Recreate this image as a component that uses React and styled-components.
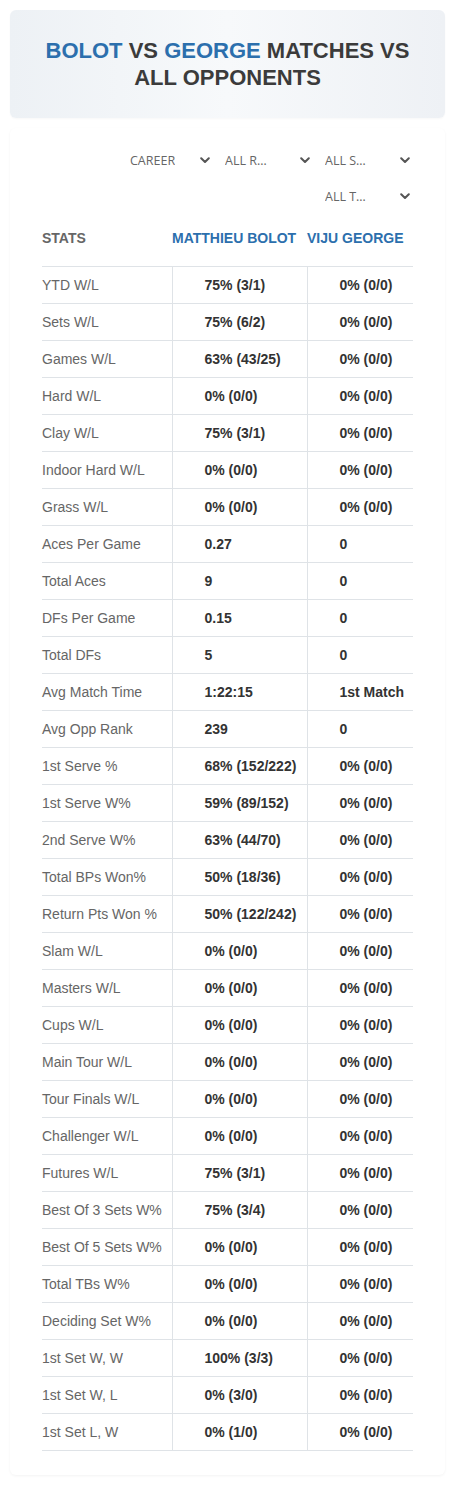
import React from 'react';
import styled, { createGlobalStyle } from 'styled-components';

const GlobalStyle = createGlobalStyle`
    body {
        margin: 0;
        background: #ffffff;
        font-family: 'Liberation Sans', Arial, sans-serif;
    }
`;

const Page = styled.div`
    padding: 10px;
    display: flex;
    flex-direction: column;
    gap: 10px;
`;

const HeaderCard = styled.div`
    border-radius: 6px;
    padding: 27px 20px;
    background: linear-gradient(90deg, #edf1f5 0%, #f7f9fb 50%, #eef1f5 100%);
    box-shadow: 0 1px 2px rgba(0, 0, 0, 0.03);
`;

const Title = styled.h1`
    margin: 0;
    text-align: center;
    font-size: 22px;
    line-height: 27px;
    font-weight: 700;
    text-transform: uppercase;
    color: #3b3b3b;
`;

const Name = styled.span`
    color: #2c6fad;
`;

const Card = styled.div`
    border-radius: 6px;
    padding: 18px 32px 24px;
    box-shadow: 0 1px 3px rgba(0, 0, 0, 0.05);
`;

const Filters = styled.div`
    display: flex;
    flex-wrap: wrap;
    justify-content: flex-end;
    gap: 8px 10px;
    margin-left: 80px;
`;

const Select = styled.div`
    width: ${p => p.$w || 90}px;
    height: 28px;
    box-sizing: border-box;
    padding: 0 3px 0 2px;
    display: flex;
    align-items: center;
    justify-content: space-between;
    font-family: 'Open Sans', 'Noto Sans', sans-serif;
    font-size: 12.5px;
    color: #666;
`;

const SelectText = styled.span`
    max-width: 52px;
    white-space: nowrap;
    overflow: hidden;
    text-overflow: ellipsis;
`;

const Table = styled.table`
    width: 100%;
    margin-top: 6px;
    border-collapse: collapse;
    table-layout: fixed;
`;

const HeadCell = styled.th`
    padding: 12px 0 18px;
    text-align: left;
    font-size: 14px;
    line-height: 20px;
    font-weight: 700;
    white-space: nowrap;
    text-transform: uppercase;
    color: ${p => (p.$blue ? '#2c6fad' : '#666')};
    border-bottom: 1px solid #dfe3e7;
`;

const Cell = styled.td`
    height: 36px;
    padding: 0 0 0 ${p => (p.$value ? '32px' : '0')};
    font-size: 14px;
    white-space: nowrap;
    font-weight: ${p => (p.$value ? 700 : 400)};
    color: ${p => (p.$value ? '#333' : '#666')};
    border-bottom: 1px solid #dfe3e7;
    & + & {
        border-left: 1px solid #dfe3e7;
    }
`;

const Chevron = () => (
    <svg width="10" height="7" viewBox="0 0 10 7">
        <polyline points="1.2,1.2 5,5 8.8,1.2" fill="none" stroke="#555" strokeWidth="2" strokeLinecap="round" strokeLinejoin="round" />
    </svg>
);

const rows = [
    ['YTD W/L', '75% (3/1)', '0% (0/0)'],
    ['Sets W/L', '75% (6/2)', '0% (0/0)'],
    ['Games W/L', '63% (43/25)', '0% (0/0)'],
    ['Hard W/L', '0% (0/0)', '0% (0/0)'],
    ['Clay W/L', '75% (3/1)', '0% (0/0)'],
    ['Indoor Hard W/L', '0% (0/0)', '0% (0/0)'],
    ['Grass W/L', '0% (0/0)', '0% (0/0)'],
    ['Aces Per Game', '0.27', '0'],
    ['Total Aces', '9', '0'],
    ['DFs Per Game', '0.15', '0'],
    ['Total DFs', '5', '0'],
    ['Avg Match Time', '1:22:15', '1st Match'],
    ['Avg Opp Rank', '239', '0'],
    ['1st Serve %', '68% (152/222)', '0% (0/0)'],
    ['1st Serve W%', '59% (89/152)', '0% (0/0)'],
    ['2nd Serve W%', '63% (44/70)', '0% (0/0)'],
    ['Total BPs Won%', '50% (18/36)', '0% (0/0)'],
    ['Return Pts Won %', '50% (122/242)', '0% (0/0)'],
    ['Slam W/L', '0% (0/0)', '0% (0/0)'],
    ['Masters W/L', '0% (0/0)', '0% (0/0)'],
    ['Cups W/L', '0% (0/0)', '0% (0/0)'],
    ['Main Tour W/L', '0% (0/0)', '0% (0/0)'],
    ['Tour Finals W/L', '0% (0/0)', '0% (0/0)'],
    ['Challenger W/L', '0% (0/0)', '0% (0/0)'],
    ['Futures W/L', '75% (3/1)', '0% (0/0)'],
    ['Best Of 3 Sets W%', '75% (3/4)', '0% (0/0)'],
    ['Best Of 5 Sets W%', '0% (0/0)', '0% (0/0)'],
    ['Total TBs W%', '0% (0/0)', '0% (0/0)'],
    ['Deciding Set W%', '0% (0/0)', '0% (0/0)'],
    ['1st Set W, W', '100% (3/3)', '0% (0/0)'],
    ['1st Set W, L', '0% (3/0)', '0% (0/0)'],
    ['1st Set L, W', '0% (1/0)', '0% (0/0)'],
];

const filters = [
    { label: 'CAREER', w: 85 },
    { label: 'ALL R…' },
    { label: 'ALL S…' },
    { label: 'ALL T…' },
];

const App = () => {
    return (
        <Page>
            <GlobalStyle />
            <HeaderCard>
                <Title>
                    <Name>Bolot</Name> vs <Name>George</Name> matches vs all opponents
                </Title>
            </HeaderCard>
            <Card>
                <Filters>
                    {filters.map(f => (
                        <Select key={f.label} $w={f.w}>
                            <SelectText>{f.label}</SelectText>
                            <Chevron />
                        </Select>
                    ))}
                </Filters>
                <Table>
                    <colgroup>
                        <col style={{ width: '130px' }} />
                        <col style={{ width: '135px' }} />
                        <col />
                    </colgroup>
                    <thead>
                        <tr>
                            <HeadCell>Stats</HeadCell>
                            <HeadCell $blue>Matthieu Bolot</HeadCell>
                            <HeadCell $blue>Viju George</HeadCell>
                        </tr>
                    </thead>
                    <tbody>
                        {rows.map(([label, a, b]) => (
                            <tr key={label}>
                                <Cell>{label}</Cell>
                                <Cell $value>{a}</Cell>
                                <Cell $value>{b}</Cell>
                            </tr>
                        ))}
                    </tbody>
                </Table>
            </Card>
        </Page>
    );
};

export default App;
